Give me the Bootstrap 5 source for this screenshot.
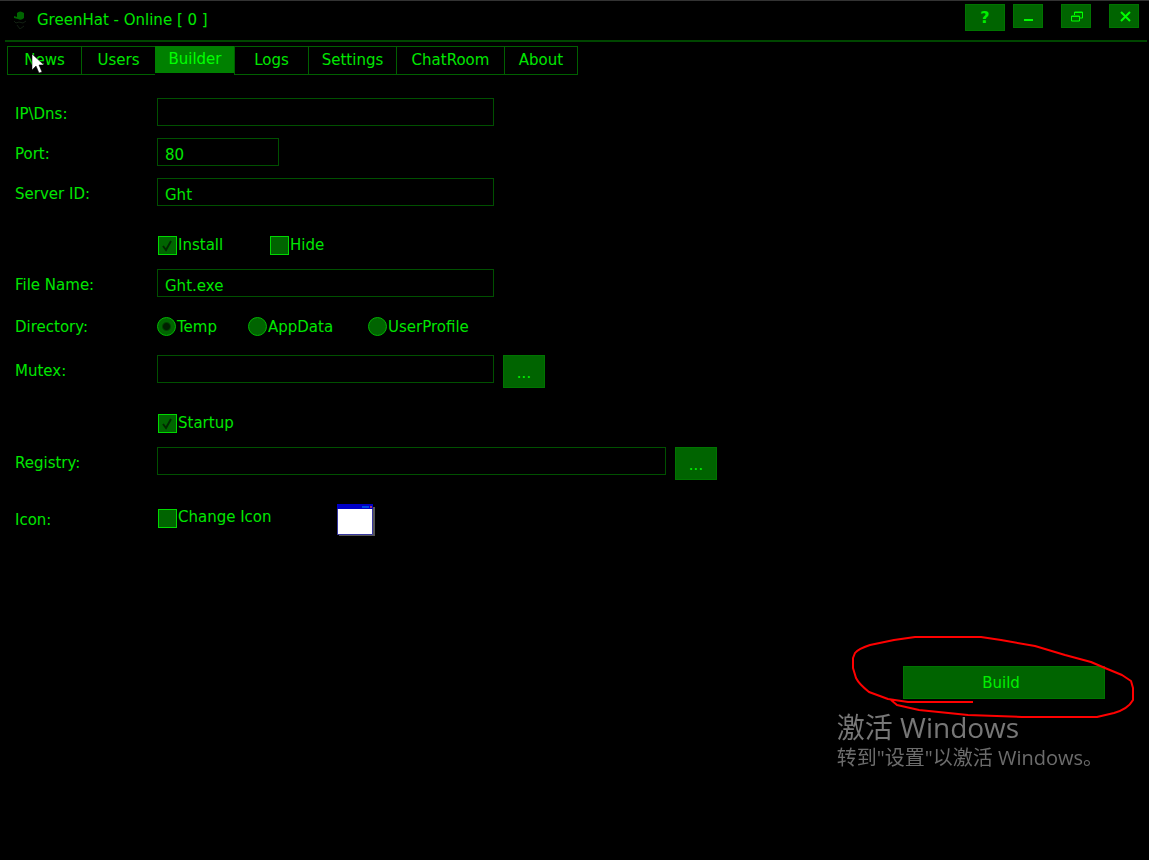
<!DOCTYPE html>
<html lang="en">
<head>
<meta charset="utf-8">
<meta name="viewport" content="width=device-width, initial-scale=1">
<title>GreenHat - Online [ 0 ]</title>
<link href="https://cdn.jsdelivr.net/npm/bootstrap@5.3.0/dist/css/bootstrap.min.css" rel="stylesheet">
<style>
  body { background: #000; color: #00e600; font: 15px/20px "DejaVu Sans", sans-serif; border-top: 1px solid #333; }
  .titlebar { height: 41px; margin: 0 2px 0 5px; border-bottom: 2px solid #004600; }
  .app-title { font-size: 15px; line-height: 20px; padding-top: 9px; }
  .solid-btn { background: #006400; border: 1px solid #007400; border-radius: 0; color: #00f000; font-size: 15px; line-height: 20px; padding: 0; }
  .solid-btn:hover { background: #007d00; color: #0f0; border-color: #007400; }
  .win-btn { width: 30px; height: 24px; }
  .help-btn { width: 40px; height: 27px; font-weight: 700; font-size: 16px; margin-right: -10px; }
  .win-group { padding: 3px 8px 0 0; gap: 18px; }
  .tabs { padding: 4px 7px 0; }
  .tabs .nav-link { color: #00e600; border: 1px solid #006000; border-right: 0; border-radius: 0; height: 29px; padding: 3px 0 0; text-align: center; }
  .tabs .nav-link:hover { color: #0f0; }
  .tabs .nav-link.active { background: #008000; border-color: #008000; color: #0f0; height: 27px; padding-top: 2px; }
  .tabs li:last-child .nav-link { border-right: 1px solid #006000; }
  .w-tab { width: 74px; } .w-tab-mid { width: 79px; } .w-tab-set { width: 88px; } .w-tab-chat { width: 108px; }
  .form-area { padding: 23px 15px 0; }
  .caption { width: 142px; flex: none; padding-top: 6px; }
  .field { background: #000; color: #00e600; border: 1px solid #005000; border-radius: 0; height: 28px; padding: 5px 7px 0; font-size: 15px; line-height: 20px; max-width: 100%; }
  .field:focus { background: #000; color: #0f0; border-color: #008000; box-shadow: none; }
  .field-s { width: 122px; } .field-m { width: 337px; } .field-l { width: 509px; }
  .more-btn { width: 42px; height: 33px; padding-top: 3px; margin-left: 9px; }
  .line { margin-bottom: 12px; }
  .line-mid { margin-bottom: 16px; }
  .line-far { margin-bottom: 28px; }
  .line-btn { margin-bottom: 24px; }
  .options { margin-left: 142px; height: 23px; }
  .radio-line { height: 26px; }
  .radio-line .caption { padding-top: 2px; }
  .opt { display: flex; align-items: center; }
  .opt input { appearance: none; flex: none; width: 19px; height: 19px; margin: 0 1px; background: #006400 center/100% no-repeat; border: 1px solid #00d800; }
  .opt input[type=radio] { border-radius: 50%; margin-left: 0; border-color: #00b400; }
  .opt input[type=checkbox]:checked { background-image: url("data:image/svg+xml,%3Csvg xmlns='http://www.w3.org/2000/svg' viewBox='0 0 17 17'%3E%3Cpath d='M4 9l3 4 5-9' fill='none' stroke='%23002800' stroke-width='2'/%3E%3C/svg%3E"); }
  .opt input[type=radio]:checked { background-image: radial-gradient(circle, #002000 3px, #006400 5px); }
  .opt-check label { margin-top: -2px; }
  .opt-radio label { margin-top: 2px; }
  .opt-install { width: 112px; } .opt-temp { width: 91px; } .opt-app { width: 120px; } .opt-icon { width: 179px; height: 28px; }
  .build-area { padding: 0 44px 161px 15px; }
  .build-btn { width: 202px; height: 33px; padding-right: 6px; }
  .scribble { left: -52px; top: -32px; pointer-events: none; }
  .pointer { left: 31px; top: 11px; pointer-events: none; }
  .activation { right: 46px; bottom: 88px; color: #777; font-family: "Open Sans", "Noto Sans CJK SC", sans-serif; pointer-events: none; }
  .activation-head { font-size: 28px; line-height: 34px; }
  .activation-text { font-size: 20px; line-height: 28px; color: #6c6c6c; }
</style>
</head>
<body class="d-flex flex-column min-vh-100">
<header class="titlebar d-flex align-items-start">
  <svg class="ms-2 mt-2" width="16" height="20" viewBox="0 0 16 20" aria-hidden="true">
    <path d="M4 4Q7 1 11 4L11 8 11 9Q8 12 5 10L1 9 1 7 4 8Z" fill="#006400"/>
    <path d="M1 12l2 2 3-1 4 1 3-2M4 16l3 4 4-3" fill="none" stroke="#122012"/>
  </svg>
  <h1 class="app-title mb-0 ms-2 fw-normal">GreenHat - Online [ 0 ]</h1>
  <div class="win-group ms-auto d-flex align-items-start">
    <button class="btn solid-btn help-btn" type="button">?</button>
    <button class="btn solid-btn win-btn d-flex" type="button" aria-label="Minimize">
      <svg width="28" height="22" viewBox="0 0 28 22"><path d="M10 15h9" stroke="#0f0" stroke-width="2"/></svg></button>
    <button class="btn solid-btn win-btn d-flex" type="button" aria-label="Restore">
      <svg width="28" height="22" viewBox="0 0 28 22" fill="none" stroke="#0f0"><path d="M12.500 10V7h8v6h-3M12 7.500h9"/><path d="M9.500 11h8v5h-8zM9 11.500h9"/></svg></button>
    <button class="btn solid-btn win-btn d-flex" type="button" aria-label="Close">
      <svg width="28" height="22" viewBox="0 0 28 22"><path d="M11 7l9 9M20 7l-9 9" stroke="#0f0" stroke-width="2"/></svg></button>
  </div>
</header>

<nav class="tabs position-relative">
  <ul class="nav">
    <li class="w-tab"><a class="nav-link" href="#">News</a></li>
    <li class="w-tab"><a class="nav-link" href="#">Users</a></li>
    <li class="w-tab-mid"><a class="nav-link active" href="#" aria-current="page">Builder</a></li>
    <li class="w-tab"><a class="nav-link" href="#">Logs</a></li>
    <li class="w-tab-set"><a class="nav-link" href="#">Settings</a></li>
    <li class="w-tab-chat"><a class="nav-link" href="#">ChatRoom</a></li>
    <li class="w-tab"><a class="nav-link" href="#">About</a></li>
  </ul>
  <svg class="pointer position-absolute" width="14" height="22" viewBox="0 0 14 22" aria-hidden="true">
    <path d="M1 1v16l4-4 3 7 3-1-3-7h5Z" fill="#fff" stroke="#000" stroke-width=".5"/>
  </svg>
</nav>

<main class="form-area">
  <div class="d-flex line"><label class="caption" for="host">IP\Dns:</label><input id="host" class="form-control field field-m" type="text"></div>
  <div class="d-flex line"><label class="caption" for="port">Port:</label><input id="port" class="form-control field field-s" type="text" value="80"></div>
  <div class="d-flex line-far"><label class="caption" for="sid">Server ID:</label><input id="sid" class="form-control field field-m" type="text" value="Ght"></div>

  <div class="d-flex line options">
    <div class="opt opt-check opt-install"><input id="install" type="checkbox" checked><label for="install">Install</label></div>
    <div class="opt opt-check"><input id="hide" type="checkbox"><label for="hide">Hide</label></div>
  </div>
  <div class="d-flex line-mid"><label class="caption" for="file">File Name:</label><input id="file" class="form-control field field-m" type="text" value="Ght.exe"></div>

  <div class="d-flex line-mid radio-line align-items-center" role="radiogroup" aria-labelledby="dir">
    <span id="dir" class="caption">Directory:</span>
    <div class="opt opt-radio opt-temp"><input id="d1" type="radio" name="dir" checked><label for="d1">Temp</label></div>
    <div class="opt opt-radio opt-app"><input id="d2" type="radio" name="dir"><label for="d2">AppData</label></div>
    <div class="opt opt-radio"><input id="d3" type="radio" name="dir"><label for="d3">UserProfile</label></div>
  </div>
  <div class="d-flex line-btn"><label class="caption" for="mutex">Mutex:</label><input id="mutex" class="form-control field field-m" type="text"><button class="btn solid-btn more-btn" type="button">...</button></div>

  <div class="d-flex line options">
    <div class="opt opt-check"><input id="startup" type="checkbox" checked><label for="startup">Startup</label></div>
  </div>
  <div class="d-flex line-btn"><label class="caption" for="reg">Registry:</label><input id="reg" class="form-control field field-l" type="text"><button class="btn solid-btn more-btn" type="button">...</button></div>

  <div class="d-flex align-items-start">
    <span class="caption">Icon:</span>
    <div class="opt opt-check opt-icon"><input id="icon" type="checkbox"><label for="icon">Change Icon</label></div>
    <svg width="40" height="34" viewBox="0 0 40 34" role="img" aria-label="Icon preview">
      <path d="M3 3h36v29H3z" fill="#555"/><path d="M1.500 1.500h35v29h-35z" fill="#fff" stroke="#3838a0"/>
      <path d="M1 0h36v5H1z" fill="#0000c8"/><path d="M26 3h7" stroke="#0096ff" stroke-width="1"/><path d="M34 3h2" stroke="#a03278" stroke-width="2"/>
    </svg>
  </div>
</main>

<footer class="build-area mt-auto d-flex justify-content-end">
  <div class="position-relative">
    <button class="btn solid-btn build-btn" type="button">Build</button>
    <svg class="scribble position-absolute" width="286" height="86" viewBox="0 0 286 86" fill="none" stroke="red" stroke-width="2" stroke-linejoin="round" aria-hidden="true">
      <path d="M122 68H57L37 65 18 58Q8 50 5 44L2 34V24L4 19Q7 15 19 11L43 6 64 3H130L150 6 184 12 214 21 240 28 254 34 271 41 280 47 282 54V66Q277 75 263 79L246 83H171L117 81 68 76 46 71 40 66"/>
    </svg>
  </div>
</footer>

<aside class="activation position-fixed" lang="zh-CN">
  <div class="activation-head">激活 Windows</div>
  <div class="activation-text">转到"设置"以激活 Windows。</div>
</aside>
<script src="https://cdn.jsdelivr.net/npm/bootstrap@5.3.0/dist/js/bootstrap.bundle.min.js"></script>
</body>
</html>
